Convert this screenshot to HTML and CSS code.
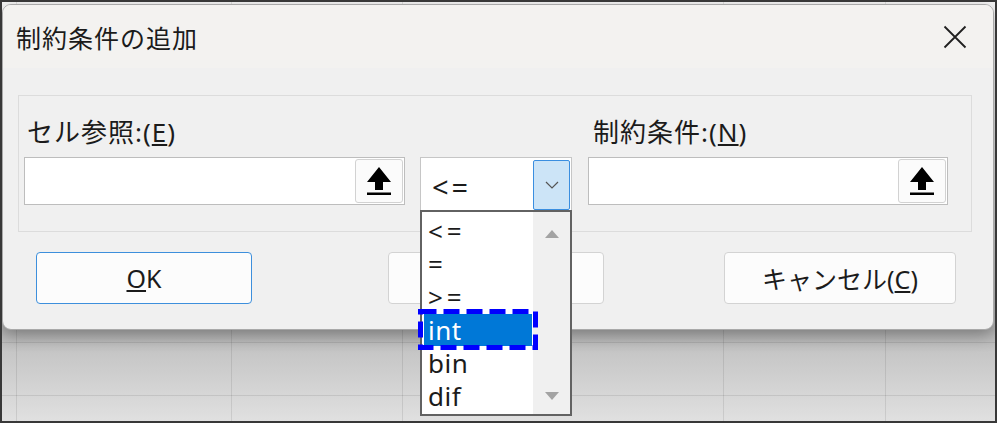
FILE: index.html
```html
<!DOCTYPE html>
<html lang="ja">
<head>
    <meta charset="UTF-8">
    <title>制約条件の追加</title>
    <link rel="stylesheet" href="styles.css">
</head>
<body>
<div class="screen">
    <div class="dialog">
        <div class="titlebar">
            <span class="title">制約条件の追加</span>
            <svg class="close" width="24" height="24" viewBox="0 0 24 24">
                <path d="M1.5 1.5 L22.5 22.5 M22.5 1.5 L1.5 22.5" stroke="#1f1f1f" stroke-width="1.8" fill="none"/>
            </svg>
        </div>

        <div class="body">
            <div class="group">
                <!-- cell reference -->
                <div class="field field-ref">
                    <div class="label">セル参照:(<u>E</u>)</div>
                    <div class="refbox">
                        <button class="pick">
                            <svg width="24" height="28" viewBox="0 0 24 28">
                                <path d="M12 0 L24 15 L16 15 L16 23 L8 23 L8 15 L0 15 Z" fill="#000"/>
                                <rect x="0" y="25.5" width="24" height="2.5" fill="#000"/>
                            </svg>
                        </button>
                    </div>
                </div>

                <!-- operator combo, opened -->
                <div class="field field-op">
                    <div class="combo">
                        <span class="combo-value">&lt;=</span>
                        <span class="combo-btn">
                            <svg width="14" height="8" viewBox="0 0 14 8">
                                <path d="M1 1 L7 7 L13 1" stroke="#555" stroke-width="1.2" fill="none"/>
                            </svg>
                        </span>
                        <div class="droplist">
                            <ul class="options">
                                <li class="op">&lt;=</li>
                                <li class="op">=</li>
                                <li class="op">&gt;=</li>
                                <li class="selected">int
                                    <svg class="focus-ring" width="120" height="41" viewBox="0 0 120 41">
                                        <rect x="2.5" y="2.5" width="115" height="36" fill="none" stroke="#0000ff" stroke-width="5" stroke-dasharray="16 7"/>
                                    </svg>
                                </li>
                                <li>bin</li>
                                <li>dif</li>
                            </ul>
                            <div class="scrollbar">
                                <svg width="14" height="8" viewBox="0 0 14 8"><path d="M7 0 L14 8 L0 8 Z" fill="#a3a3a3"/></svg>
                                <svg width="14" height="8" viewBox="0 0 14 8"><path d="M0 0 L14 0 L7 8 Z" fill="#a3a3a3"/></svg>
                            </div>
                        </div>
                    </div>
                </div>

                <!-- constraint -->
                <div class="field field-con">
                    <div class="label">制約条件:(<u>N</u>)</div>
                    <div class="refbox">
                        <button class="pick">
                            <svg width="24" height="28" viewBox="0 0 24 28">
                                <path d="M12 0 L24 15 L16 15 L16 23 L8 23 L8 15 L0 15 Z" fill="#000"/>
                                <rect x="0" y="25.5" width="24" height="2.5" fill="#000"/>
                            </svg>
                        </button>
                    </div>
                </div>
            </div>

            <div class="buttons">
                <button class="btn btn-ok"><u>O</u>K</button>
                <!-- middle button sits under the open list -->
                <button class="btn btn-add" aria-label="追加"></button>
                <button class="btn btn-cancel">キャンセル(<u>C</u>)</button>
            </div>
        </div>
    </div>
</div>
</body>
</html>
```

FILE: styles.css
```css
* {
    box-sizing: border-box;
}

body {
    margin: 0;
    font-family: "Noto Sans", "Noto Sans CJK JP", sans-serif;
    color: #1b1b1b;
}

/* the dimmed sheet behind the dialog */
.screen {
    width: 997px;
    height: 423px;
    border: 2px solid #383838;
    overflow: hidden;
    padding-top: 2px;
    background:
        linear-gradient(rgba(0,0,0,.09), rgba(0,0,0,.09)) 14px 0 / 1px 100% no-repeat,
        linear-gradient(rgba(0,0,0,.09), rgba(0,0,0,.09)) 229px 0 / 1px 100% no-repeat,
        linear-gradient(rgba(0,0,0,.09), rgba(0,0,0,.09)) 400px 0 / 1px 100% no-repeat,
        linear-gradient(rgba(0,0,0,.09), rgba(0,0,0,.09)) 721px 0 / 1px 100% no-repeat,
        linear-gradient(rgba(0,0,0,.09), rgba(0,0,0,.09)) 883px 0 / 1px 100% no-repeat,
        linear-gradient(rgba(0,0,0,.09), rgba(0,0,0,.09)) 0 340px / 100% 1px no-repeat,
        linear-gradient(rgba(0,0,0,.09), rgba(0,0,0,.09)) 0 393px / 100% 1px no-repeat,
        linear-gradient(#f4f4f4 0, #f4f4f4 8px, #b4b4b4 328px, #c6c6c6 350px, #e0e0e0 100%);
}

.dialog {
    width: 992px;
    height: 326px;
    border: 1px solid #a9a9a9;
    border-radius: 9px;
    background: #f0f0f0;
    box-shadow: 0 6px 16px rgba(0, 0, 0, 0.3);
}

.titlebar {
    height: 63px;
    display: flex;
    align-items: center;
    justify-content: space-between;
    padding: 0 26px 0 13px;
    background: #f3f2f0;
    border-radius: 8px 8px 0 0;
}

.title {
    font-family: "Noto Sans CJK JP", sans-serif;
    font-size: 25px;
    letter-spacing: 1px;
}

.body {
    padding: 27px 0 0 15px;
}

.group {
    width: 954px;
    height: 137px;
    border: 1px solid #dcdcdc;
    padding: 18px 0 0 5px;
    display: flex;
    align-items: flex-start;
}

.field-ref {
    width: 381px;
}

.field-op {
    width: 152px;
    margin-left: 15px;
    padding-top: 43px;
}

.field-con {
    width: 360px;
    margin-left: 16px;
}

.label {
    height: 36px;
    line-height: 36px;
    font-size: 26px;
    padding-left: 3px;
    margin-bottom: 7px;
    letter-spacing: 1px;
}

.field-con .label {
    padding-left: 5px;
}

.refbox {
    height: 48px;
    border: 1px solid #bdbdbd;
    background: #fff;
    padding: 1px;
    display: flex;
    justify-content: flex-end;
}

.pick {
    width: 48px;
    height: 44px;
    border: 1px solid #d2d2d2;
    border-radius: 3px;
    background: #fbfbfb;
    padding: 0;
    display: flex;
    align-items: center;
    justify-content: center;
}

/* combo box */
.combo {
    position: relative;
    height: 53px;
    border: 1px solid #c6c6c6;
    border-bottom: none;
    background: #fff;
    display: flex;
    align-items: flex-end;
    padding-left: 11px;
}

.combo-value {
    align-self: center;
    font-size: 29px;
    line-height: 36px;
    margin-top: 6px;
    letter-spacing: 3px;
}

.combo-btn {
    margin-left: auto;
    margin-right: 1px;
    width: 37px;
    height: 50px;
    background: #cce4f7;
    border: 1px solid #3a8ee0;
    border-radius: 2px;
    display: flex;
    align-items: center;
    justify-content: center;
}

.droplist {
    position: absolute;
    top: 52px;
    left: -1px;
    width: 152px;
    height: 206px;
    border: 2px solid #626262;
    background: #fff;
    display: flex;
    z-index: 2;
}

.options {
    flex: 1;
    list-style: none;
    margin: 0;
    padding: 3px 0 0 0;
}

.options li {
    height: 33px;
    line-height: 33px;
    font-size: 26px;
    padding-left: 6px;
    letter-spacing: 0.5px;
}

.options li.op {
    letter-spacing: 4px;
}

.options li.selected {
    position: relative;
    height: 32px;
    line-height: 32px;
    margin: 0 1px 1px 2px;
    padding-left: 4px;
    background: #0078d7;
    color: #fff;
}

.focus-ring {
    position: absolute;
    left: -6px;
    top: -5px;
}

.scrollbar {
    width: 37px;
    background: #f0f0f0;
    display: flex;
    flex-direction: column;
    align-items: center;
    justify-content: space-between;
    padding: 18px 0 14px;
}

/* bottom buttons */
.buttons {
    display: flex;
    margin-top: 20px;
    margin-left: 18px;
}

.btn {
    height: 52px;
    font-family: "Noto Sans", "Noto Sans CJK JP", sans-serif;
    font-size: 25px;
    color: #1b1b1b;
    background: #fcfcfc;
    border: 1px solid #d3d3d3;
    border-radius: 4px;
    padding: 0;
}

.btn-ok {
    width: 216px;
    border-color: #3d8fdc;
}

.btn-add {
    width: 216px;
    margin-left: 136px;
}

.btn-cancel {
    width: 232px;
    margin-left: 120px;
}
```
